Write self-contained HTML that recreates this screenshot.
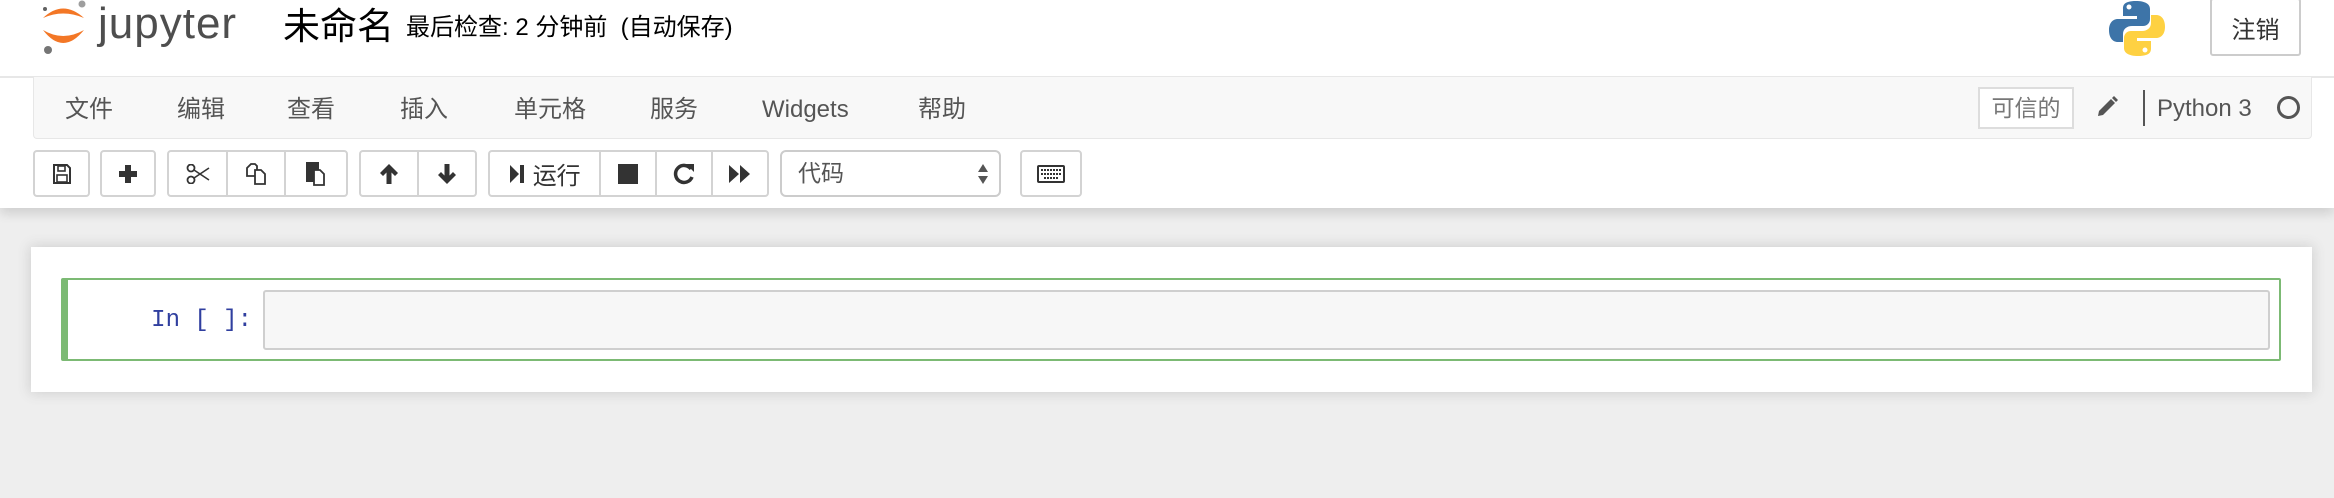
<!DOCTYPE html>
<html><head><meta charset="utf-8"><style>
*{margin:0;padding:0;box-sizing:border-box}
body{width:2334px;height:498px;background:#eeeeee;position:relative;overflow:hidden;font-family:"Liberation Sans","Noto Sans CJK SC",sans-serif;color:#333}
.a{position:absolute}
#hdr{left:0;top:0;width:2334px;height:208px;background:#fff;box-shadow:0 6px 10px rgba(0,0,0,.12)}
#menubar{left:33px;top:77px;width:2279px;height:62px;background:#f8f8f8;border:1px solid #e7e7e7;border-top:none;border-radius:0 0 4px 4px}
.mi{top:95px;font-size:24px;color:#555;line-height:30px}
.btn{top:150px;height:47px;border:2px solid #d3d3d3;border-radius:4px;background:#fff;display:flex;align-items:center;justify-content:center}
.grp{top:150px;height:47px;border:2px solid #d3d3d3;border-radius:4px;background:#fff;display:flex}
.grp>div{display:flex;align-items:center;justify-content:center;border-right:2px solid #d3d3d3;height:100%}
.grp>div:last-child{border-right:none}
</style></head><body>
<div id="hdr" class="a"></div>
<div class="a" style="left:0;top:76px;width:2334px;height:2px;background:#e7e7e7"></div>
<!-- logo -->
<svg class="a" style="left:36px;top:0" width="56" height="56" viewBox="0 0 56 56">
<path d="M7 18 Q27 -1 48 18 Q27 9 7 18Z" fill="#f37726"/>
<path d="M7 30 Q27 56 48 30 Q27 42 7 30Z" fill="#f37726"/>
<circle cx="46" cy="4" r="3.5" fill="#9e9e9e"/>
<circle cx="9" cy="9" r="2" fill="#616161"/>
<circle cx="12" cy="50" r="4" fill="#757575"/>
</svg>
<div class="a" style="left:98px;top:-4px;font-size:44px;color:#4e4e4e;line-height:56px;letter-spacing:1px;font-weight:300">jupyter</div>
<div class="a" style="left:283px;top:4px;font-size:37px;color:#000;line-height:46px">未命名</div>
<div class="a" style="left:406px;top:12px;font-size:24px;color:#000;line-height:32px">最后检查: 2 分钟前 &nbsp;(自动保存)</div>
<!-- python logo -->
<svg class="a" style="left:2109px;top:0" width="56" height="57" viewBox="0 0 56 57">
<path d="M27 1 C14 1 14 6 14 9 V16 H28 V19 H9 C3 19 0 24 0 30 C0 37 3 42 9 42 H14 V34 C14 29 18 26 23 26 H34 C38 26 41 23 41 19 V9 C41 4 36 1 27 1Z" fill="#3d74a8"/>
<path d="M29 56 C42 56 42 51 42 48 V41 H28 V38 H47 C53 38 56 33 56 27 C56 20 53 15 47 15 H42 V23 C42 28 38 31 33 31 H22 C18 31 15 34 15 38 V48 C15 53 20 56 29 56Z" fill="#fed142"/>
<circle cx="20" cy="7" r="2.5" fill="#fff"/><circle cx="36" cy="50" r="2.5" fill="#fff"/>
</svg>
<div class="a" style="left:2210px;top:-2px;width:91px;height:58px;border:2px solid #ccc;border-radius:3px;font-size:24px;display:flex;align-items:center;justify-content:center;color:#333">注销</div>
<!-- menubar -->
<div id="menubar" class="a"></div>
<div class="a mi" style="left:65px">文件</div>
<div class="a mi" style="left:177px">编辑</div>
<div class="a mi" style="left:287px">查看</div>
<div class="a mi" style="left:400px">插入</div>
<div class="a mi" style="left:514px">单元格</div>
<div class="a mi" style="left:650px">服务</div>
<div class="a mi" style="left:762px">Widgets</div>
<div class="a mi" style="left:918px">帮助</div>
<div class="a" style="left:1978px;top:87px;width:96px;height:42px;border:2px solid #ddd;background:#fff;font-size:23px;color:#777;display:flex;align-items:center;justify-content:center;line-height:1">可信的</div>
<svg class="a" style="left:2096px;top:96px" width="22" height="22" viewBox="0 0 22 22"><path d="M2 20 L3 15 L15 3 L19 7 L7 19 Z" fill="#555"/><path d="M16 2 L18 0 L22 4 L20 6Z" fill="#555"/></svg>
<div class="a" style="left:2143px;top:90px;width:2px;height:36px;background:#555"></div>
<div class="a" style="left:2157px;top:94px;font-size:24px;color:#555;line-height:30px">Python 3</div>
<div class="a" style="left:2277px;top:96px;width:23px;height:23px;border:3px solid #555;border-radius:50%"></div>
<!-- toolbar -->
<div class="a btn" style="left:33px;width:57px"><svg width="20" height="22" viewBox="0 0 20 22"><path d="M2 2 H15 L18 5 V20 H2 Z" fill="none" stroke="#333" stroke-width="2"/><rect x="6" y="3" width="7" height="5" fill="none" stroke="#333" stroke-width="1.6"/><rect x="5" y="12" width="10" height="7" fill="none" stroke="#333" stroke-width="1.6"/></svg></div>
<div class="a btn" style="left:100px;width:56px"><svg width="20" height="20" viewBox="0 0 20 20"><path d="M7 1h6v6h6v6h-6v6H7v-6H1V7h6z" fill="#333"/></svg></div>
<div class="a grp" style="left:167px;width:181px">
<div style="width:59px"><svg width="24" height="20" viewBox="0 0 24 20"><circle cx="5" cy="4" r="3.5" fill="none" stroke="#333" stroke-width="1.8"/><circle cx="5" cy="16" r="3.5" fill="none" stroke="#333" stroke-width="1.8"/><path d="M8 6 L23 16 M8 14 L23 4" stroke="#333" stroke-width="1.6"/></svg></div>
<div style="width:58px"><svg width="22" height="24" viewBox="0 0 22 24"><path d="M6 2 H10 L12 4 V14 H2 V6Z" fill="#fff" stroke="#333" stroke-width="1.8"/><path d="M10 8 H16 L20 12 V22 H10Z" fill="#fff" stroke="#333" stroke-width="1.8"/></svg></div>
<div style="width:58px"><svg width="22" height="26" viewBox="0 0 22 26"><rect x="2" y="1" width="13" height="20" fill="#333"/><path d="M10 9 H16 L20 13 V24 H10Z" fill="#fff" stroke="#333" stroke-width="1.8"/></svg></div>
</div>
<div class="a grp" style="left:359px;width:118px">
<div style="width:58px"><svg width="20" height="22" viewBox="0 0 20 22"><path d="M10 1 L19 10 L16 13 L12.5 9.5 V21 H7.5 V9.5 L4 13 L1 10Z" fill="#333"/></svg></div>
<div style="width:56px"><svg width="20" height="22" viewBox="0 0 20 22"><path d="M10 21 L19 12 L16 9 L12.5 12.5 V1 H7.5 V12.5 L4 9 L1 12Z" fill="#333"/></svg></div>
</div>
<div class="a grp" style="left:488px;width:281px">
<div style="width:113px;font-size:24px;color:#333"><svg width="16" height="20" viewBox="0 0 16 20" style="margin-right:8px"><path d="M1 1 L10 10 L1 19Z" fill="#333"/><rect x="11" y="1" width="4" height="18" fill="#333"/></svg>运行</div>
<div style="width:56px"><div style="width:20px;height:20px;background:#333"></div></div>
<div style="width:57px"><svg width="22" height="22" viewBox="0 0 22 22"><path d="M18 6 A8.5 8.5 0 1 0 19 14" fill="none" stroke="#333" stroke-width="3.5"/><path d="M13 1 L21 1 L21 9Z" fill="#333"/></svg></div>
<div style="width:55px"><svg width="24" height="20" viewBox="0 0 24 20"><path d="M1 1 L11 10 L1 19Z M12 1 L22 10 L12 19Z" fill="#333"/></svg></div>
</div>
<div class="a" style="left:780px;top:150px;width:221px;height:47px;border:2px solid #ccc;border-radius:6px;background:#fff;font-size:23px;color:#555;padding-left:16px;line-height:43px">代码
<svg class="a" style="right:10px;top:11px" width="12" height="22" viewBox="0 0 12 22"><path d="M6 1 L11 9 H1Z M6 21 L11 13 H1Z" fill="#555"/></svg></div>
<div class="a btn" style="left:1020px;width:62px"><svg width="28" height="18" viewBox="0 0 28 18"><rect x="1" y="1" width="26" height="16" rx="1" fill="none" stroke="#333" stroke-width="2"/><path d="M4 5h20M4 9h20M7 13h14" stroke="#333" stroke-width="2" stroke-dasharray="2 1"/></svg></div>
<!-- notebook -->
<div class="a" style="left:31px;top:247px;width:2281px;height:145px;background:#fff;box-shadow:0 0 12px 1px rgba(87,87,87,.2)"></div>
<div class="a" style="left:61px;top:278px;width:2220px;height:83px;border:2px solid #7cba74;border-left:7px solid #7cba74;border-radius:2px"></div>
<div class="a" style="left:120px;top:306px;width:132px;text-align:right;font-family:'Liberation Mono',monospace;font-size:24px;color:#303f9f;line-height:30px">In [ ]:</div>
<div class="a" style="left:263px;top:290px;width:2007px;height:60px;background:#f7f7f7;border:2px solid #cfcfcf;border-radius:3px"></div>
</body></html>
